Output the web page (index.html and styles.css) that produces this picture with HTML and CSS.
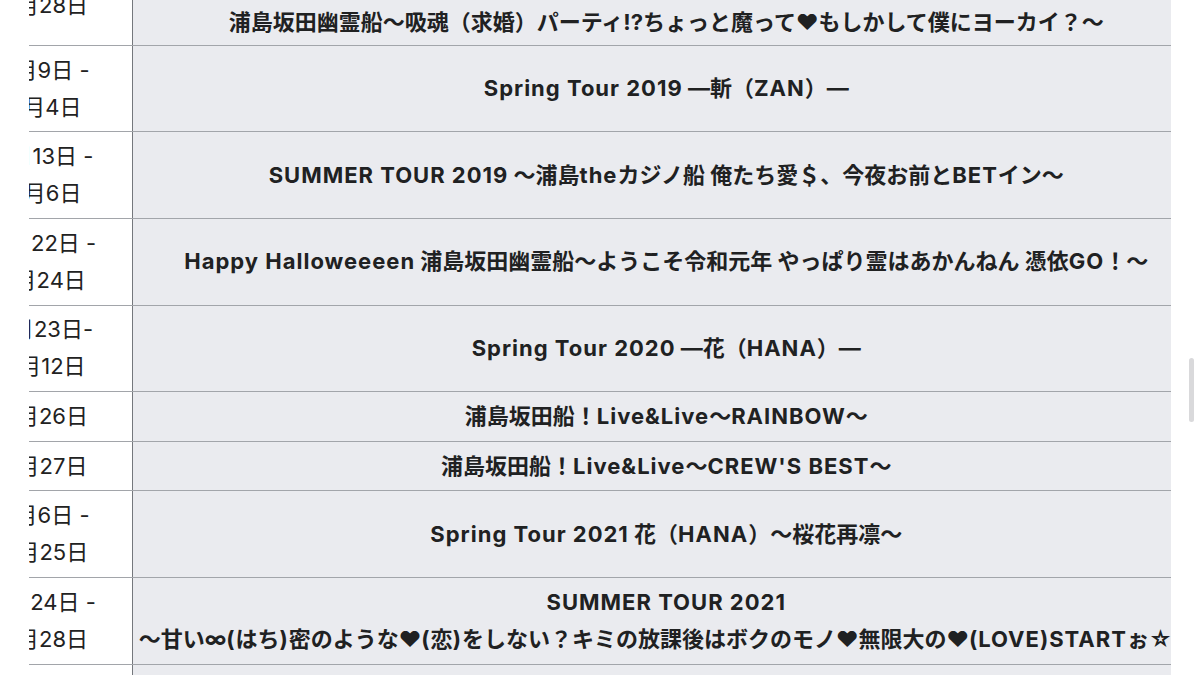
FILE: index.html
```
<!DOCTYPE html>
<html>

<head>
  <meta charset="UTF-8" />
  <title>ライブ一覧</title>
  <link rel="stylesheet" href="styles.css">
</head>

<body>
  <div class="scroller">
    <table class="livelist">
      <colgroup>
        <col class="col-date">
        <col class="col-title">
      </colgroup>
      <tr class="cut">
        <td>9月21日 -<br>9月28日</td>
        <th>浦島坂田幽霊船〜吸魂（求婚）パーティ!?ちょっと魔って♥もしかして僕にヨーカイ？〜</th>
      </tr>
      <tr>
        <td>3月9日 -<br>5月4日</td>
        <th><span class="en">Spring Tour 2019</span> —斬（<span class="en">ZAN</span>）—</th>
      </tr>
      <tr>
        <td>7月13日 -<br>9月6日</td>
        <th><span class="en">SUMMER TOUR 2019</span> 〜浦島<span class="en">the</span>カジノ船 俺たち愛＄、今夜お前と<span class="en">BET</span>イン〜</th>
      </tr>
      <tr>
        <td>9月22日 -<br>1月24日</td>
        <th><span class="en">Happy Halloweeeen</span> 浦島坂田幽霊船〜ようこそ令和元年 やっぱり霊はあかんねん 憑依<span class="en">GO</span>！〜</th>
      </tr>
      <tr>
        <td>2月23日-<br>5月12日</td>
        <th><span class="en">Spring Tour 2020</span> —花（<span class="en">HANA</span>）—</th>
      </tr>
      <tr>
        <td>2月26日</td>
        <th>浦島坂田船！<span class="en">Live&amp;Live</span>〜<span class="en">RAINBOW</span>〜</th>
      </tr>
      <tr>
        <td>2月27日</td>
        <th>浦島坂田船！<span class="en">Live&amp;Live</span>〜<span class="en">CREW'S BEST</span>〜</th>
      </tr>
      <tr>
        <td>3月6日 -<br>4月25日</td>
        <th><span class="en">Spring Tour 2021</span> 花（<span class="en">HANA</span>）〜桜花再凛〜</th>
      </tr>
      <tr>
        <td>7月24日 -<br>8月28日</td>
        <th><span class="en">SUMMER TOUR 2021</span><br>〜甘い∞<span class="en">(</span>はち<span class="en">)</span>密のような♥<span class="en">(</span>恋<span class="en">)</span>をしない？キミの放課後はボクのモノ♥無限大の♥<span class="en">(LOVE)START</span>ぉ☆〜</th>
      </tr>
      <tr>
        <td>10月1日</td>
        <th>&nbsp;</th>
      </tr>
    </table>
  </div>
  <div class="scrollbar"></div>
</body>

</html>
```

FILE: styles.css
```
* {
  margin: 0;
  padding: 0;
}

html,
body {
  width: 100%;
  height: 100%;
  background-color: #fff;
  overflow: hidden;
}

body {
  font-family: "Inter", "Noto Sans CJK JP", sans-serif;
  font-size: 22px;
  color: #202122;
}

.scroller {
  width: 1142px;
  margin-left: 29px;
  height: 675px;
  overflow: hidden;
}

.livelist {
  table-layout: fixed;
  border-collapse: collapse;
  width: 1230px;
  margin-left: -59px;
  margin-top: -57px;
  font-size: 22px;
}

.col-date {
  width: 162px;
}

.col-title {
  width: 1068px;
}

.livelist td,
.livelist th {
  line-height: 37px;
  padding: 5.8px 6px;
  border-top: 1px solid #a2a5aa;
  border-bottom: 1px solid #a2a5aa;
  text-align: center;
  white-space: nowrap;
  vertical-align: middle;
}

.livelist td {
  padding-right: 16px;
  background-color: #fff;
  font-weight: 400;
  color: #222;
}

.livelist th {
  background-color: #eaebef;
  font-weight: 700;
  border-left: 1px solid #74777c;
}

.en {
  letter-spacing: 1px;
}

.cut td,
.cut th {
  vertical-align: bottom;
}

.cut td {
  padding-bottom: 21px;
}

.cut th {
  padding-bottom: 4px;
}

.scrollbar {
  position: fixed;
  left: 1189px;
  top: 358px;
  width: 5px;
  height: 64px;
  border-radius: 3px;
  background-color: #d9d9db;
}
```
